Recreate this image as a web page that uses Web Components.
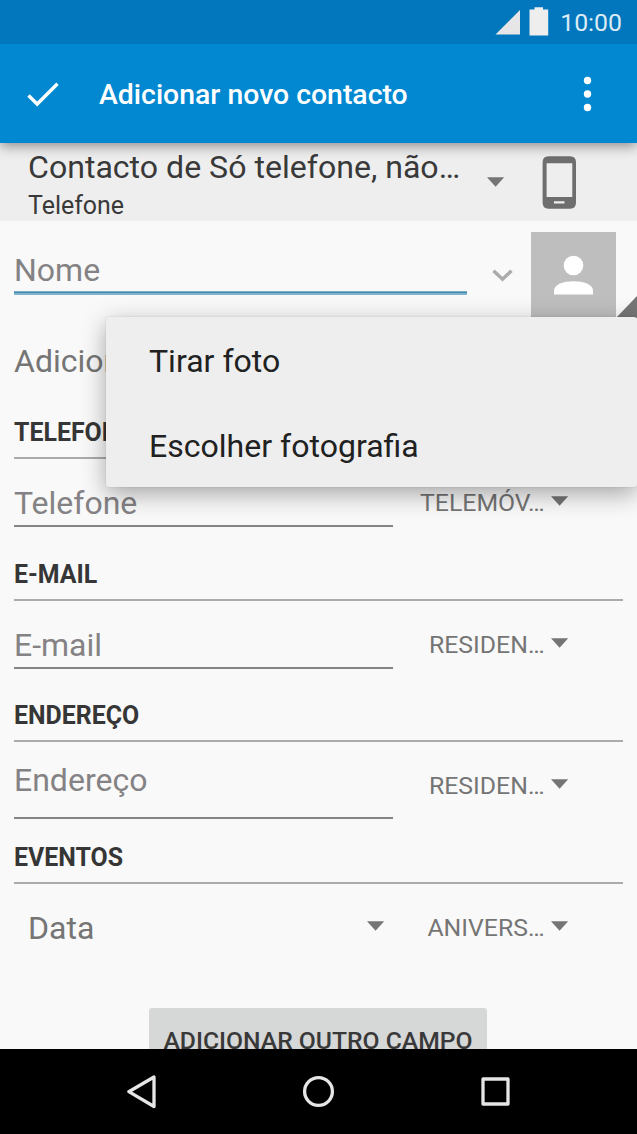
<!DOCTYPE html>
<html lang="pt">
<head>
<meta charset="utf-8">
<title>Adicionar novo contacto</title>
<style>
html, body { margin: 0; height: 100%; overflow: hidden; background: #f9f9f9; }
body { font-family: Roboto, "Liberation Sans", sans-serif; }
</style>
</head>
<body>
<contact-app></contact-app>
<script>
const define = (name, html) => customElements.define(name, class extends HTMLElement {
  constructor() {
    super();
    const t = document.createElement('template');
    t.innerHTML = html;
    this.attachShadow({ mode: 'open' }).append(t.content.cloneNode(true));
  }
});

define('status-bar', `
<style>
:host { display: flex; height: 44px; background: #0277bd; color: #dcebf4; font-size: 24.8px; line-height: 44px; justify-content: flex-end; position: relative; z-index: 3; }
svg { display: block; flex: none; }
span { margin: 1px 15px 0 10px; }
</style>
<svg width="56" height="44"><path d="M1.500 34.5H26V10z" fill="#e6e6e6"/><path d="M35.500 35.5V9.5H40.500V7.3H49V9.500H54.200V35.500z" fill="#eee"/></svg>
<span>10:00</span>`);

define('action-bar', `
<style>
:host { display: flex; height: 99px; background: #0288d1; color: #fff; box-shadow: 0 3px 12px rgba(0,0,0,.42); position: relative; z-index: 2; align-items: center; }
svg { display: block; flex: none; }
h1 { margin: 2px 0 0; flex: 1; font-size: 28.4px; font-weight: 500; line-height: 40px; }
</style>
<svg width="99" height="99"><path d="M28.500 51.500L37.200 60L57.500 39.700" fill="none" stroke="#fff" stroke-width="3.400"/></svg>
<h1><slot></slot></h1>
<svg width="99" height="99"><g fill="#fff"><circle cx="49.500" cy="36.500" r="3.700"/><circle cx="49.500" cy="50" r="3.700"/><circle cx="49.500" cy="63.500" r="3.700"/></g></svg>`);

define('drop-arrow', `
<style>:host { display: block; width: 18px; height: 10px; flex: none; } svg { display: block; }</style>
<svg width="18" height="10"><path d="M0 .3H17.200L8.600 9.700z" fill="#757575"/></svg>`);

define('account-row', `
<style>
:host { display: flex; height: 78px; background: #eee; color: #393939; padding-left: 28px; box-sizing: border-box; }
.text { width: 459px; }
.name { margin-top: 5px; font-size: 32.1px; line-height: 38px; white-space: nowrap; }
.type { margin-top: 5px; font-size: 24.95px; line-height: 30px; }
drop-arrow { margin-top: 34px; }
svg { display: block; margin: 12px 0 0 37px; }
</style>
<div class="text"><div class="name"><slot name="name"></slot></div><div class="type"><slot name="type"></slot></div></div>
<drop-arrow></drop-arrow>
<svg width="35" height="56"><path fill-rule="evenodd" d="M6.500 1.300H28Q34 1.300 34 7.300V47.500Q34 53.700 28 53.700H6.500Q.6 53.700 .6 47.500V7.300Q.6 1.300 6.500 1.300zM4.600 8.300V42H30.300V8.300zM12 46.300V48.600H22.500V46.300z" fill="#6e6e6e"/></svg>`);

define('text-field', `
<style>
:host { display: block; box-sizing: border-box; width: 379px; flex: none; color: #848284; font-size: 32px; line-height: 38px; border-bottom: 2px solid #858585; height: 43px; white-space: nowrap; }
:host([focused]) { border-bottom: 0; width: 453px; height: 44px; }
:host([focused])::after { content: ""; display: block; height: 4px; margin-top: 2px; background: linear-gradient(#7cafca 0 25%, #4388ad 25% 50%, #83b3cc 50%); }
:host([tall]) { height: 58px; }
</style><slot></slot>`);

define('name-row', `
<style>
:host { display: flex; height: 97px; padding-left: 14px; box-sizing: border-box; }
text-field { margin-top: 30px; }
svg { display: block; flex: none; }
</style>
<text-field focused><slot></slot></text-field>
<svg width="64" height="97"><path d="M26.500 49.700L35.500 58.200L44.500 49.700" fill="none" stroke="#ababab" stroke-width="3.500"/></svg>
<svg width="106" height="97"><path d="M0 11H85V97H0z" fill="#bebebe"/><circle cx="42.500" cy="44.500" r="9.800" fill="#fff"/><path d="M23 73.500V69.500C23 57 62 57 62 69.500V73.500z" fill="#fff"/><path d="M85 97L106 75V97z" fill="#757575"/></svg>`);

define('form-section', `
<style>
:host { display: block; height: 142px; }
:host([short]) { height: 141px; }
h2 { margin: 0 14px; height: 42px; box-sizing: border-box; border-bottom: 2px solid #ababab; color: #363636; font-size: 24.9px; font-weight: 700; line-height: 32px; }
.row { display: flex; padding-left: 14px; align-items: flex-start; }
.value { margin-top: var(--value-top, 25px); }
.label { width: 151.500px; flex: none; margin: 29px 6.500px 0 0; text-align: right; color: #757575; font-size: 24.8px; line-height: 30px; white-space: nowrap; }
drop-arrow { margin-top: 37px; }
</style>
<h2><slot name="title"></slot></h2>
<div class="row"><div class="value"><slot></slot></div><div class="label"><slot name="label"></slot></div><drop-arrow></drop-arrow></div>`);

define('date-field', `
<style>
:host { display: flex; width: 379px; color: #757575; font-size: 32.1px; line-height: 38px; box-sizing: border-box; padding: 0 8.500px 0 14px; justify-content: space-between; }
drop-arrow { margin-top: 12px; }
</style><slot></slot><drop-arrow></drop-arrow>`);

define('popup-menu', `
<style>
:host { display: block; position: absolute; left: 106px; top: 317px; width: 531px; height: 170px; box-sizing: border-box; background: #eee; border-radius: 3px; box-shadow: 0 7px 24px rgba(0,0,0,.34), 0 0 2px rgba(0,0,0,.12); z-index: 3; color: #212121; font-size: 32.05px; line-height: 85px; padding-left: 43px; }
::slotted(div) { height: 85px; padding-top: 2px; box-sizing: border-box; }
</style><slot></slot>`);

define('nav-bar', `
<style>
:host { display: block; height: 85px; background: #000; position: relative; z-index: 4; }
svg { display: block; }
</style>
<svg width="637" height="85" fill="none" stroke="#e6e6e6" stroke-width="3.300" stroke-linejoin="round"><path d="M154 28V57.500L128.800 42.700z"/><circle cx="318.500" cy="42.500" r="13.900"/><rect x="483" y="30" width="25" height="25"/></svg>`);

define('contact-app', `
<style>
:host { display: flex; flex-direction: column; width: 637px; height: 1134px; position: relative; overflow: hidden; background: #f9f9f9; }
main { flex: 1; min-height: 0; overflow: hidden; }
.more { height: 99px; box-sizing: border-box; padding: 24px 0 0 14px; color: #757575; font-size: 32px; line-height: 38px; white-space: nowrap; }
.address { --value-top: 19px; }
button { display: block; width: 338px; height: 64px; margin: 24px 0 0 149px; border: 0; border-radius: 3px; background: #d6d7d7; color: #393939; font: 500 24.7px/64px Roboto, sans-serif; padding: 1px 0 0; white-space: nowrap; }
</style>
<status-bar></status-bar>
<action-bar>Adicionar novo contacto</action-bar>
<main>
<account-row><span slot="name">Contacto de Só telefone, não…</span><span slot="type">Telefone</span></account-row>
<name-row>Nome</name-row>
<div class="more">Adicionar</div>
<form-section><span slot="title">TELEFONE</span><text-field>Telefone</text-field><span slot="label">TELEMÓV…</span></form-section>
<form-section short><span slot="title">E-MAIL</span><text-field>E-mail</text-field><span slot="label">RESIDEN…</span></form-section>
<form-section class="address"><span slot="title">ENDEREÇO</span><text-field tall>Endereço</text-field><span slot="label">RESIDEN…</span></form-section>
<form-section><span slot="title">EVENTOS</span><date-field>Data</date-field><span slot="label">ANIVERS…</span></form-section>
<button>ADICIONAR OUTRO CAMPO</button>
</main>
<nav-bar></nav-bar>
<popup-menu><div>Tirar foto</div><div>Escolher fotografia</div></popup-menu>`);
</script>
</body>
</html>
